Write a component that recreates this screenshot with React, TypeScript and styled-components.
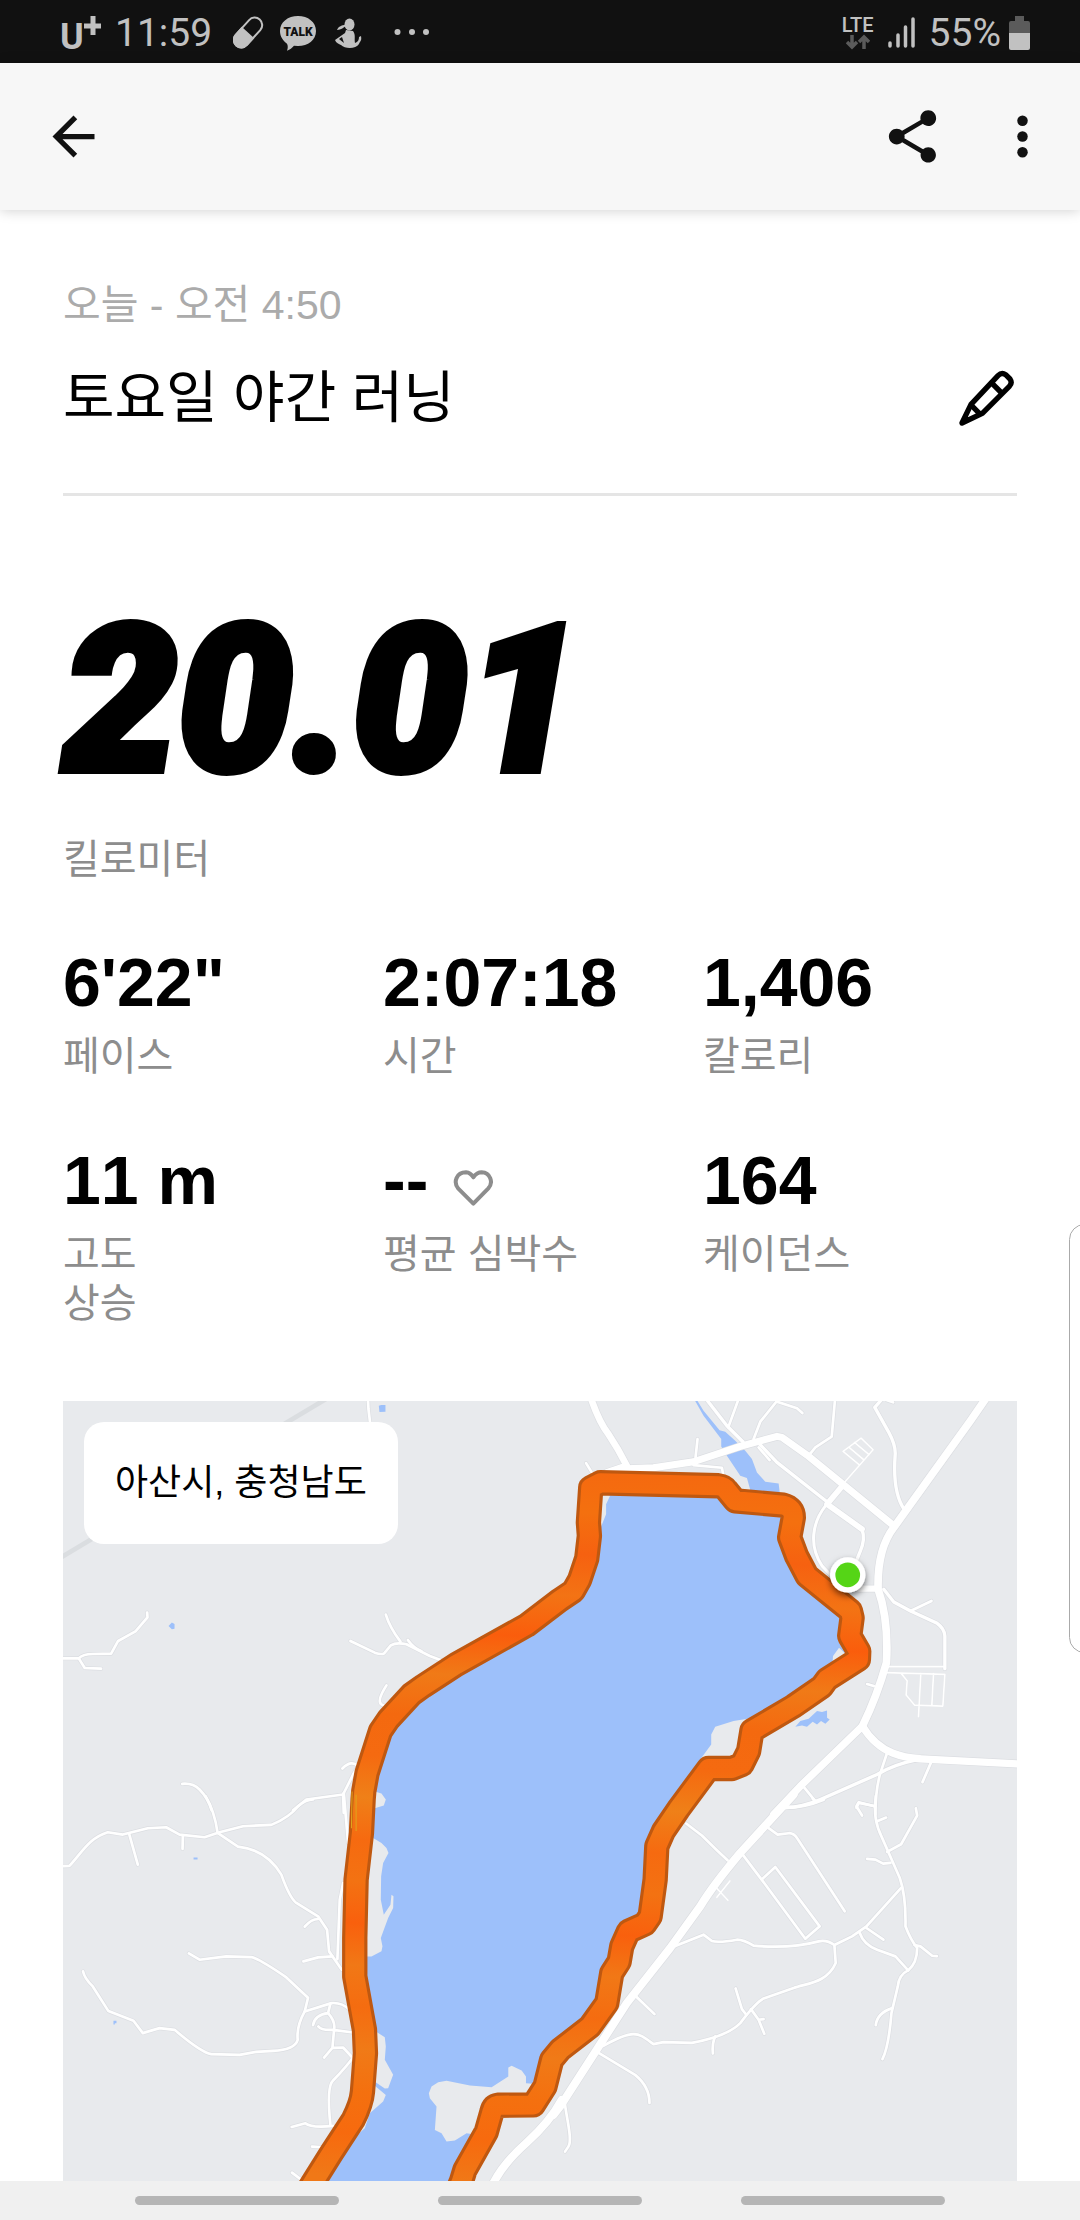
import React from "react";
import styled, { createGlobalStyle } from "styled-components";

const sans = `"Liberation Sans", "Noto Sans CJK KR", sans-serif`;
const system = `Roboto, "Noto Sans CJK KR", sans-serif`;

const GlobalStyle = createGlobalStyle`
  *, *::before, *::after { box-sizing: border-box; }
  body { margin: 0; background: #fff; color: #000; font-family: ${sans}; }
  h1, p, dl, dt, dd { margin: 0; }
  svg { display: block; flex: none; }
`;

const Screen = styled.div`
  display: flex;
  flex-direction: column;
  height: 100vh;
  overflow: hidden;
  position: relative;
`;

const StatusBar = styled.header`
  display: flex;
  align-items: center;
  justify-content: space-between;
  flex: none;
  height: 63px;
  padding: 2px 50px 0 61px;
  background: #111;
  color: #c1c1c1;
  font-family: ${system};
  font-size: 39px;
  line-height: 44px;
`;

const StatusGroup = styled.div<{ $gap: number }>`
  display: flex;
  align-items: center;
  gap: ${(p) => p.$gap}px;
`;

const Carrier = styled.svg`
  overflow: visible;
`;

const Network = styled.div`
  display: flex;
  flex-direction: column;
  align-items: center;
  font-size: 20px;
  font-weight: 500;
  line-height: 18px;
`;

const AppBar = styled.nav`
  display: flex;
  align-items: center;
  justify-content: space-between;
  flex: none;
  height: 147px;
  padding: 0 26px 0 42px;
  background: #f7f7f7;
  box-shadow: 0 1px 12px rgba(0, 0, 0, 0.18);
  z-index: 1;
`;

const Actions = styled.div`
  display: flex;
  gap: 47px;
`;

const IconButton = styled.button`
  display: flex;
  padding: 0;
  border: 0;
  background: none;
  color: #111;
  cursor: pointer;
`;

const Content = styled.main`
  display: flex;
  flex-direction: column;
  flex: 1;
  min-height: 0;
  padding: 71px 63px 0;
`;

const RunDate = styled.p`
  color: #ababab;
  font-size: 41px;
  line-height: 48px;
`;

const TitleRow = styled.div`
  display: flex;
  align-items: center;
  justify-content: space-between;
  padding: 37px 2px 63px 0;
  border-bottom: 3px solid #e5e5e5;
`;

const Title = styled.h1`
  font-size: 56px;
  font-weight: 400;
  line-height: 64px;
`;

const Label = styled.dt`
  color: #8d8d8d;
  font-size: 40px;
  line-height: 49px;
`;

const Distance = styled.dl`
  display: flex;
  flex-direction: column-reverse;
  gap: 58px;
  padding-top: 129px;
`;

const DistanceValue = styled.dd`
  font-family: ${system};
  font-size: 204px;
  font-style: italic;
  font-weight: 900;
  line-height: 152px;
  -webkit-text-stroke: 8px #000;
`;

const Stats = styled.dl`
  display: grid;
  grid-template-columns: repeat(3, 1fr);
  gap: 63px 6px;
  padding: 62px 0 73px;
`;

const Stat = styled.div`
  display: flex;
  flex-direction: column-reverse;
  justify-content: flex-end;
  gap: 14px;
`;

const Value = styled.dd`
  display: flex;
  align-items: flex-end;
  gap: 25px;
  font-size: 68px;
  font-weight: 700;
  font-kerning: none;
  line-height: 72px;
`;

const HeartIcon = styled.svg`
  margin-bottom: 9px;
`;

const MapPanel = styled.section`
  position: relative;
  flex: 1;
  min-height: 0;
  overflow: hidden;
  background: #e8eaed;
`;

const MapDrawing = styled.svg`
  width: 100%;
  height: 100%;
`;

const Place = styled.p`
  position: absolute;
  top: 21px;
  left: 21px;
  padding: 37px 31px;
  border-radius: 20px;
  background: #fff;
  font-size: 36px;
  line-height: 48px;
`;

const EdgeHandle = styled.aside`
  position: absolute;
  top: 1224px;
  right: -20px;
  width: 31px;
  height: 429px;
  border: 1px solid #aaa;
  border-radius: 18px;
  background: #fff;
  z-index: 2;
`;

const NavBar = styled.footer`
  display: flex;
  align-items: center;
  justify-content: center;
  gap: 99px;
  flex: none;
  height: 39px;
  background: #f0f0f0;
`;

const NavKey = styled.button`
  width: 204px;
  height: 9px;
  padding: 0;
  border: 0;
  border-radius: 5px;
  background: #b5b5b5;
`;

type Road = [d: string, width?: number];

/* Each quarter of the map keeps its own origin. */
const quarters: { shift: string; roads: Road[] }[] = [
  {
    shift: "translate(-9 -36)",
    roads: [
      ["M924 20 L926 60 L932 110 L934 150"],
      ["M0 807 L58 807 Q70 794 100 794 L155 793 L176 755 L228 726 L264 684 L263 670"],
      ["M58 807 L76 836 L125 838"],
      ["M872 755 L945 790 Q965 797 973 792 L993 768 Q1010 758 1040 765 L1110 800 L1150 815"],
      ["M978 676 Q990 715 1022 757"],
      ["M1044 752 Q1060 775 1085 786"],
      ["M980 888 Q950 935 965 945 L985 955"],
      ["M848 1137 Q875 1110 895 1130 L880 1155 L850 1215 L740 1230 L700 1262"],
      ["M850 1215 L852 1270"],
      ["M368 1183 Q400 1180 420 1200 Q445 1225 456 1262"],
    ],
  },
  {
    shift: "translate(1491 -36)",
    roads: [
      ["M90 20 C110 80 125 110 145 135 Q175 180 200 230 L140 250", 20],
      ["M180 240 L280 236 L400 218 L540 172 L650 142 L665 145 L740 198 L1000 410", 21],
      ["M78 222 L95 250"],
      ["M412 150 L406 205"],
      ["M400 228 L485 236 L490 262"],
      ["M430 20 L500 110 L548 158", 10],
      ["M535 30 L504 115"],
      ["M650 36 L600 98 L580 150"],
      ["M650 38 L710 58 L726 72"],
      ["M824 30 L814 143 L765 175 L748 196"],
      ["M598 165 L650 220 L800 338", 10],
      ["M595 175 L628 213"],
      ["M848 288 L800 345 L905 420", 17],
      ["M905 420 Q915 450 900 485 L890 510", 10],
      ["M797 348 C755 400 745 470 785 530 L815 562", 9],
      ["M852 280 L938 182 L902 147 L848 187 L895 226 M865 174 L910 212 M882 160 L926 197", 5],
      ["M965 30 L943 55 L985 130 Q1007 170 1004 200 Q996 310 1032 362", 10],
      ["M980 34 L998 40"],
      ["M1285 15 L1230 95 L1000 415 Q950 480 953 600 Q985 690 978 820 Q950 920 906 1010", 23],
      ["M895 598 L953 598", 19],
      ["M970 600 L1000 638 L1050 665 L1130 702 Q1152 718 1153 740 L1153 838", 10],
      ["M1050 665 L1113 635"],
      ["M978 832 L1153 832 M975 850 L1153 855 L1147 950 L1062 947 L1037 917 L1040 874 L1022 852 M1081 853 L1074 982 M1119 853 L1114 948", 5],
      ["M920 884 L940 890"],
      ["M640 1275 L720 1190 L906 1010 C960 1100 1040 1105 1080 1108 L1380 1124", 22],
      ["M980 1090 L960 1150 Q945 1200 945 1275"],
      ["M1065 1112 Q1000 1125 950 1155 L780 1230 Q720 1255 670 1254", 10],
      ["M730 1192 L765 1235"],
      ["M1112 1118 L1086 1178"],
      ["M945 1250 L895 1240 L888 1255"],
    ],
  },
  {
    shift: "translate(-9 1194)",
    roads: [
      ["M0 200 L30 199 C70 155 90 115 145 98 L190 105 L265 86 L320 83 L360 105 L435 113 L480 98 L550 80 L635 76 Q690 53 715 20 Q740 0 760 0"],
      ["M438 -10 Q465 35 474 100 L535 141 Q620 150 665 225 Q690 295 710 310 L775 350 L802 390 L808 455 L846 510"],
      ["M209 103 L235 195"],
      ["M370 108 L369 148"],
      ["M852 -20 L865 130"],
      ["M850 250 L840 300 L833 478"],
      ["M735 381 Q755 358 775 358"],
      ["M731 485 L775 473 L818 470"],
      ["M388 461 L420 480 L500 470 L575 472 Q600 478 680 533 L745 594 L735 635 Q710 680 714 720 Q705 750 640 753 L590 756 L540 765 L455 763 Q425 758 345 690 L300 685 L250 700 L222 663 L147 634 L100 560 Q75 535 71 515"],
      ["M735 635 L815 610 Q845 607 870 630"],
      ["M812 612 L805 640 Q765 645 760 676"],
      ["M805 640 Q828 665 823 690 L818 744 L850 743 L875 770 M776 680 Q785 692 820 690 L880 698 M818 744 L793 773"],
      ["M878 775 Q860 800 820 842 Q800 860 812 975"],
      ["M696 981 L737 970 Q755 985 820 978"],
      ["M757 1040 L790 1042"],
      ["M697 1118 L730 1143"],
      ["M1505 900 Q1470 965 1400 1028 Q1330 1090 1300 1150", 24],
    ],
  },
  {
    shift: "translate(1491 1194)",
    roads: [
      ["M700 -15 L540 160 Q460 255 420 320 L330 445 L200 610 L0 920 L-20 945", 24],
      ["M790 0 Q730 25 670 24", 10],
      ["M378 72 L425 108 L470 152 L502 182"],
      ["M545 162 L604 240 L735 417 L778 380 L645 202 L604 240"],
      ["M620 82 L652 105 L685 101 Q700 100 712 118 L853 335"],
      ["M466 262 L503 302 M509 244 L470 293", 5],
      ["M330 445 L430 405 L455 424 Q475 430 530 420 Q550 420 580 438 Q690 448 775 425 Q800 420 822 436 L875 410 L918 380 L1022 265"],
      ["M822 436 L826 490 C800 550 740 550 700 565 L610 596 Q585 610 540 670 Q500 710 395 729 L310 727 L280 733 C235 700 225 685 130 738"],
      ["M946 -10 C940 40 945 75 965 115 L1018 235 Q1037 290 1035 380 Q1050 420 1070 445 Q1070 490 1043 512 Q1015 525 1012 560 L993 640 Q985 740 966 778"],
      ["M1066 26 L1070 48 L1022 134 L980 157"],
      ["M942 20 L895 8 L888 20 L905 48"],
      ["M950 65 L977 54"],
      ["M920 178 L945 180 L968 192 L990 190"],
      ["M918 385 L969 420"],
      ["M898 400 Q910 435 950 450 L1005 470 L1043 512"],
      ["M1062 436 L1080 440 L1115 468 L1129 469"],
      ["M995 625 Q950 640 946 676"],
      ["M526 566 L545 628 L558 645 M572 628 L595 660 L612 702 M595 660 L610 658"],
      ["M465 710 Q455 730 458 761"],
      ["M228 590 L283 643"],
      ["M112 757 L225 825 Q268 860 268 909"],
      ["M13 900 C20 960 38 1020 25 1040 L15 1055"],
      ["M757 -2 L768 8"],
    ],
  },
];

const route =
  "M731 2374 L754 2337 L806 2254 L871 2154 Q896 2105 899 2070 L908 1954 L905 1884 L876 1724 L876 1609 L880 1434 L896 1294 L901 1194 L903 1169 L913 1114 L953 989 L977 954 L1046 879 L1081 854 L1181 789 L1391 672 L1491 596 L1531 569 L1550 535 L1571 472 L1579 404 L1576 364 L1583 260 L1612 245 L1965 254 Q1983 256 1989 266 L2016 299 L2160 312 Q2190 320 2190 349 L2179 409 L2200 465 L2231 524 L2361 629 L2366 650 L2359 704 L2386 750 L2385 774 L2291 834 L2275 856 L2191 914 L2066 988 L2056 1049 L2036 1089 L2006 1101 L1936 1101 L1845 1224 L1801 1289 L1781 1334 L1776 1434 L1761 1544 L1745 1567 L1696 1589 L1676 1634 L1668 1680 L1646 1714 L1631 1804 L1581 1874 L1491 1944 L1466 1974 L1446 2054 L1411 2109 L1305 2110 Q1291 2112 1287 2130 L1270 2190 L1206 2304 L1196 2337 L1181 2374";

const water = "#9dc0fa";
const land = "#e8eaed";

const heat = [
  "#f5690f", "#f4700f", "#f66110", "#f37314", "#fa5d0c", "#f07a17", "#f4690f",
  "#f56a10", "#ef8018", "#f66a10", "#f37212", "#f9600d", "#f17816", "#f56c10",
  "#f07a17", "#f4700f", "#f76a0e", "#f07817",
];

function RunMap() {
  return (
    <MapDrawing viewBox="0 0 2862 2337" preserveAspectRatio="xMidYMin slice" role="img" aria-label="러닝 경로 지도">
      <defs>
        <linearGradient id="heat" gradientUnits="userSpaceOnUse" x1="1400" y1="200" x2="1300" y2="2340">
          {heat.map((c, i) => (
            <stop key={i} offset={i / (heat.length - 1)} stopColor={c} />
          ))}
        </linearGradient>
        <filter id="pinShadow" x="-50%" y="-50%" width="200%" height="200%">
          <feDropShadow dx="0" dy="10" stdDeviation="9" floodColor="#000" floodOpacity="0.55" />
        </filter>
      </defs>

      <path d="M-20 478 L810 -18" stroke="#dadde0" strokeWidth="14" />

      <path d={`${route} Z`} fill={water} />
      <path
        transform="translate(1491 -36)"
        fill={water}
        d="M405 36 L430 80 L483 150 L483 172 L500 200 L540 260 L560 267 L575 320 L660 325 L655 283 L615 278 L590 250 L575 210 L555 185 L525 155 L495 128 L478 124 L430 65 L412 36 Z M705 1012 L720 995 L745 988 L770 965 L785 968 L800 963 L800 985 L808 990 L795 1003 L782 995 L770 1005 L757 997 L740 1012 L725 1008 Z"
      />
      <g fill={water}>
        <path d="M948 14 L955 12 L968 12 L968 32 L950 33 Z M318 674 L328 664 L336 668 L336 682 L328 684 Z M393 1368 H405 V1374 H393 Z M153 1857 H162 V1864 H157 V1868 H153 Z" />
      </g>
      <g fill={land}>
        <path
          transform="translate(1491 -36)"
          d="M120 310 L150 320 L138 345 L138 375 L122 415 Z M836 775 L862 800 L816 825 L818 800 Z M727 892 L745 878 L775 882 L740 915 Z M600 982 L520 995 L465 1012 L453 1035 L453 1065 L420 1110 L500 1150 L580 1060 Z"
        />
        <path
          transform="translate(-9 1194)"
          d="M945 -24 L965 -18 L978 0 L972 18 L940 28 Z M940 115 L965 130 L980 145 L986 160 L970 190 L964 230 L963 300 L972 345 L992 315 L995 285 L1001 290 L1000 325 L985 355 L963 415 L968 440 L965 455 L935 470 L905 470 L905 300 Z M940 690 L975 712 L978 740 L975 780 L1000 825 L985 865 L975 866 L930 835 Z M930 845 L978 885 L970 905 L930 940 L915 985 L895 1003 L870 960 Z M870 1035 L845 1080 L830 1070 Z M1107 880 L1115 860 L1135 847 L1160 843 L1230 857 L1295 862 L1345 830 L1345 803 L1355 798 L1385 812 L1398 830 L1398 850 L1430 852 L1420 920 L1290 960 L1240 1003 L1220 1000 L1185 1022 L1160 1025 L1145 1000 L1125 990 L1130 920 L1110 895 Z"
        />
      </g>

      {[true, false].map((casing) =>
        quarters.map(({ shift, roads }) => (
          <g
            key={shift + casing}
            transform={shift}
            fill="none"
            stroke={casing ? "#dcdee2" : "#fff"}
            strokeLinecap="round"
            strokeLinejoin="round"
          >
            {roads.map(([d, width = 8]) => (
              <path key={d} d={d} strokeWidth={casing ? width + (width > 5 ? 4 : 0) : width} />
            ))}
          </g>
        ))
      )}

      <g fill="none" strokeLinejoin="round">
        <path d={route} stroke="#bf5810" strokeWidth="76" />
        <path d={route} stroke="url(#heat)" strokeWidth="57" />
        <path d="M868 1170 L866 1280 M880 1180 L880 1288" stroke="#e0a51c" strokeWidth="3" />
      </g>

      <circle cx="2353" cy="521" r="53" fill="#fff" filter="url(#pinShadow)" />
      <circle cx="2353" cy="521" r="37" fill="#55d516" />
    </MapDrawing>
  );
}

function StatusIcons() {
  return (
    <svg width="197" height="36" viewBox="233 14 197 36" fill="#c1c1c1" aria-hidden="true">
      <g transform="rotate(42 248 31.5)">
        <rect x="240.500" y="14" width="15" height="35" rx="7.500" fill="none" stroke="#c1c1c1" strokeWidth="2" />
        <path d="M239.500 31.500h17v10a8.500 8.500 0 0 1-17 0z" />
      </g>
      <path d="M298 15c10 0 18 6 18 15s-8 15-18 15l-4-.3c-2 2-4 4-7 5 1-3 1-5 0-7-4-3-7-7-7-12.700 0-9 8-15 18-15z" />
      <text x="298" y="35" fill="#111" fontFamily="Roboto, sans-serif" fontSize="12" fontWeight="900" textAnchor="middle">
        TALK
      </text>
      <ellipse cx="349.500" cy="23.500" rx="5" ry="6" />
      <path fillRule="evenodd" d="M346 24c-5 0-8 2-9 5 4 0 7-3 9-4zM346 29l-1 3-10 7c1 3 4 4 6 5 4 4 15 4 18-1 1-3 3-3 2-8l-2 1c0 3-1 5-4 6-1-4 1-8-2-12zM342 36l2 6-5-4z" />
      <circle cx="397.500" cy="31" r="3" />
      <circle cx="412" cy="31" r="3" />
      <circle cx="426" cy="31" r="3" />
    </svg>
  );
}

const stats: { label: React.ReactNode; value: string; heart?: boolean }[] = [
  { label: "페이스", value: "6'22\"" },
  { label: "시간", value: "2:07:18" },
  { label: "칼로리", value: "1,406" },
  { label: <>고도<br />상승</>, value: "11 m" },
  { label: "평균 심박수", value: "--", heart: true },
  { label: "케이던스", value: "164" },
];

export default function App() {
  return (
    <>
      <GlobalStyle />
      <Screen>
        <StatusBar>
          <StatusGroup $gap={14}>
            <Carrier width="40" height="36" viewBox="61 14 40 36" role="img" aria-label="U+">
              <text x="60" y="48" fill="#c1c1c1" fontFamily="Roboto, sans-serif" fontSize="36" fontWeight="700">
                U
              </text>
              <path d="M93 15v19M84 25h17" stroke="#c1c1c1" strokeWidth="5" />
            </Carrier>
            <StatusGroup $gap={21}>
              <time>11:59</time>
              <StatusIcons />
            </StatusGroup>
          </StatusGroup>
          <StatusGroup $gap={14}>
            <Network>
              LTE
              <svg width="24" height="16" viewBox="0 0 24 16" fill="none" stroke="#5b5b5b" strokeWidth="3.500" aria-hidden="true">
                <path d="M6 1v12M1 8l5 5 5-5M18 15V3M13 8l5-5 5 5" />
              </svg>
            </Network>
            <svg width="27" height="32" viewBox="0 0 27 32" stroke="#c1c1c1" strokeWidth="3.500" strokeLinecap="round" aria-hidden="true">
              <path d="M2 26v3M10 18v11M17.500 10v19M25 2v27" />
            </svg>
            <StatusGroup $gap={8}>
              <span>55%</span>
              <svg width="21" height="34" viewBox="0 0 21 34" aria-hidden="true">
                <path d="M6 0h9v5h4q2 0 2 2v11H0V7q0-2 2-2h4z" fill="#5b5b5b" />
                <path d="M0 17h21v15q0 2-2 2H2q-2 0-2-2z" fill="#c1c1c1" />
              </svg>
            </StatusGroup>
          </StatusGroup>
        </StatusBar>

        <AppBar>
          <IconButton aria-label="뒤로">
            <svg width="63" height="63" viewBox="0 0 24 24" fill="currentColor">
              <path d="M20 11H7.830l5.590-5.590L12 4l-8 8 8 8 1.410-1.410L7.830 13H20v-2z" />
            </svg>
          </IconButton>
          <Actions>
            <IconButton aria-label="공유">
              <svg width="63" height="63" viewBox="0 0 24 24" fill="currentColor">
                <path d="M18 16.080c-.76 0-1.440.3-1.960.770L8.910 12.700c.050-.230.090-.460.090-.700s-.040-.470-.090-.700l7.050-4.110c.540.500 1.250.810 2.040.810 1.660 0 3-1.340 3-3s-1.340-3-3-3-3 1.340-3 3c0 .240.040.470.090.700L8.040 9.810C7.500 9.310 6.790 9 6 9c-1.660 0-3 1.340-3 3s1.340 3 3 3c.790 0 1.500-.310 2.040-.810l7.120 4.160c-.050.210-.080.430-.080.650 0 1.610 1.310 2.920 2.920 2.920s2.920-1.310 2.920-2.920-1.310-2.920-2.920-2.920z" />
              </svg>
            </IconButton>
            <IconButton aria-label="더보기">
              <svg width="63" height="63" viewBox="0 0 24 24" fill="currentColor">
                <circle cx="12" cy="6" r="2" />
                <circle cx="12" cy="12" r="2" />
                <circle cx="12" cy="18" r="2" />
              </svg>
            </IconButton>
          </Actions>
        </AppBar>

        <Content>
          <RunDate>오늘 - 오전 4:50</RunDate>
          <TitleRow>
            <Title>토요일 야간 러닝</Title>
            <IconButton aria-label="제목 수정">
              <svg width="56" height="57" viewBox="57 54 168 171" fill="none" stroke="#000" strokeWidth="16" strokeLinejoin="round">
                <path d="M66 213L93 157L174 71Q185 60 197 68L210 81Q218 93 208 103L127 184Z" />
                <path d="M154 92L188 126M92 158L121 187" />
                <path d="M72 196L84 208" strokeWidth="10" />
              </svg>
            </IconButton>
          </TitleRow>

          <Distance>
            <Label>킬로미터</Label>
            <DistanceValue>20.01</DistanceValue>
          </Distance>

          <Stats>
            {stats.map(({ label, value, heart }) => (
              <Stat key={value}>
                <Label>{label}</Label>
                <Value>
                  {value}
                  {heart && (
                    <HeartIcon width="40" height="38" viewBox="1240 718 120 114" fill="none" stroke="#8d8d8d" strokeWidth="12" strokeLinejoin="round" aria-hidden="true">
                      <path d="M1301 822L1256 777C1240 758 1250 728 1279 728C1290 729 1298 738 1301 743C1306 736 1314 728 1326 728C1352 729 1362 758 1346 776Z" />
                    </HeartIcon>
                  )}
                </Value>
              </Stat>
            ))}
          </Stats>

          <MapPanel>
            <RunMap />
            <Place>아산시, 충청남도</Place>
          </MapPanel>
        </Content>

        <NavBar>
          <NavKey aria-label="최근 앱" />
          <NavKey aria-label="홈" />
          <NavKey aria-label="뒤로 가기" />
        </NavBar>
        <EdgeHandle aria-label="엣지 패널" />
      </Screen>
    </>
  );
}
